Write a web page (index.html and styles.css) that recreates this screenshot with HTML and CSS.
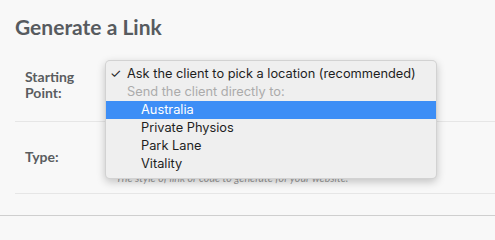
FILE: index.html
```html
<!DOCTYPE html>
<html>
<head>
<meta charset="utf-8">
<link rel="stylesheet" href="styles.css">
</head>
<body>
<div class="page">
  <h1 class="title">Generate a Link</h1>
  <div class="row row-start">
    <div class="label">Starting<br>Point:</div>
    <div class="field"></div>
  </div>
  <div class="row row-type">
    <div class="label">Type:</div>
    <div class="field">
      <div class="help">The style of link or code to generate for your website.</div>
    </div>
  </div>
</div>
<div class="footer-line"></div>
<div class="menu">
  <div class="item checked"><span class="check">✓</span>Ask the client to pick a location (recommended)</div>
  <div class="item disabled">Send the client directly to:</div>
  <div class="item sub selected">Australia</div>
  <div class="item sub">Private Physios</div>
  <div class="item sub">Park Lane</div>
  <div class="item sub">Vitality</div>
</div>
</body>
</html>
```
FILE: styles.css
```css
html, body {
  margin: 0;
  padding: 0;
}
body {
  background: #f8f8f8;
  font-family: Lato, "Open Sans", sans-serif;
  width: 495px;
  height: 216px;
  overflow: hidden;
  position: relative;
}
.page {
  padding: 14px 0 0 15px;
}
.title {
  margin: 0;
  font-size: 21px;
  line-height: 26px;
  font-weight: 700;
  color: #575b5f;
}
.row {
  display: grid;
  grid-template-columns: 91px 1fr;
  padding-left: 10px;
  border-bottom: 1px solid #e6e6e6;
}
.row-start {
  height: 82px;
  box-sizing: border-box;
  padding-top: 29px;
}
.row-type {
  height: 72px;
  box-sizing: border-box;
  padding-top: 27px;
}
.label {
  font-size: 14px;
  line-height: 16px;
  font-weight: 700;
  color: #5a5d60;
}
.help {
  padding-top: 22px;
  font-size: 10.7px;
  line-height: 14px;
  font-style: italic;
  color: #9a9a9a;
}
.footer-line {
  position: absolute;
  left: 0;
  right: 0;
  bottom: 0;
  height: 1px;
  background: #cfcfcf;
}
.menu {
  position: absolute;
  left: 105px;
  top: 60px;
  width: 332px;
  box-sizing: border-box;
  padding: 4px 0 5px;
  background: #efefef;
  border-radius: 5px;
  border: 1px solid rgba(0,0,0,0.12);
  box-shadow: 0 3px 9px rgba(0,0,0,0.22);
  font-family: Inter, "Noto Sans", sans-serif;
  font-size: 12.8px;
}
.item {
  position: relative;
  height: 18px;
  line-height: 18px;
  padding-left: 21px;
  color: #1e1e1e;
  white-space: nowrap;
}
.check {
  position: absolute;
  left: 4px;
  top: 0;
}
.disabled {
  color: #ababab;
}
.sub {
  padding-left: 35px;
}
.selected {
  background: #3d8ef6;
  color: #fff;
}
```
